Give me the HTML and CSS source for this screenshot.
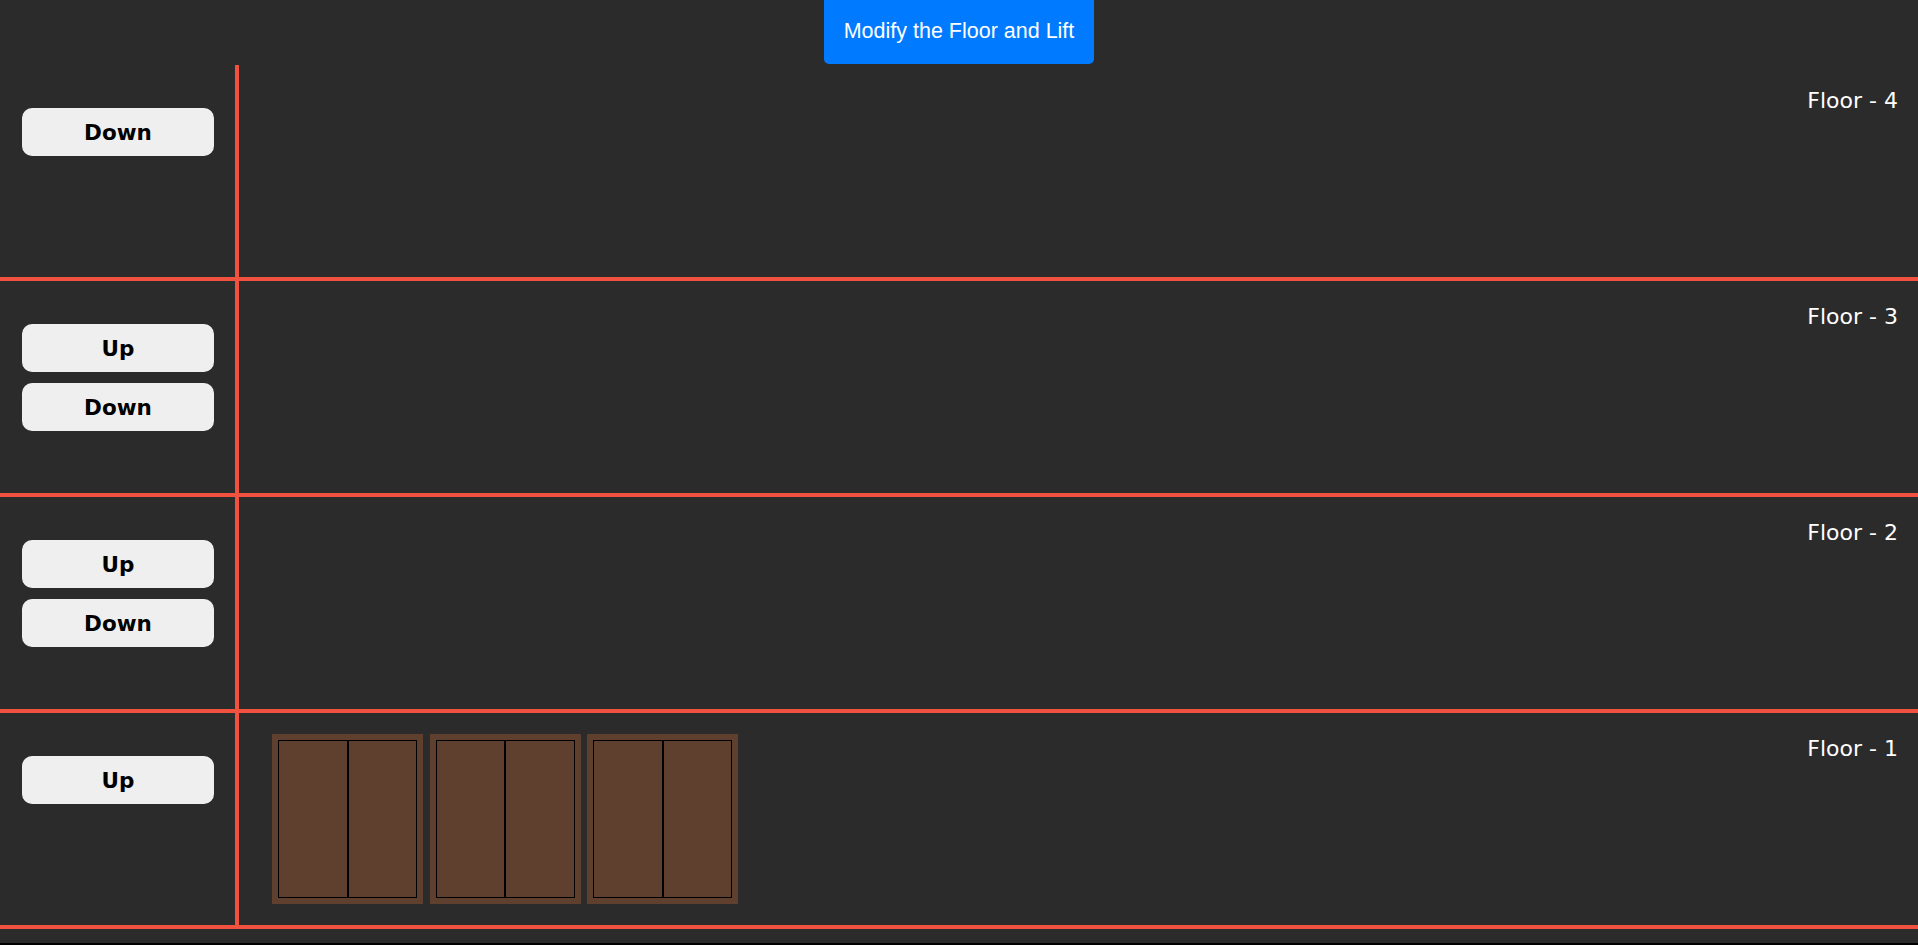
FILE: index.html
```html
<!DOCTYPE html>
<html lang="en">
<head>
<meta charset="utf-8">
<title>Lift Simulation</title>
<link rel="stylesheet" href="styles.css">
</head>
<body>
<div class="app">
  <header class="top">
    <button class="modify-btn">Modify the Floor and Lift</button>
  </header>
  <div class="building">
    <div class="floor">
      <div class="controls">
        <button class="call-btn">Down</button>
      </div>
      <div class="shaft">
        <div class="lifts"></div>
        <span class="floor-label">Floor - 4</span>
      </div>
    </div>
    <div class="floor">
      <div class="controls">
        <button class="call-btn">Up</button>
        <button class="call-btn">Down</button>
      </div>
      <div class="shaft">
        <div class="lifts"></div>
        <span class="floor-label">Floor - 3</span>
      </div>
    </div>
    <div class="floor">
      <div class="controls">
        <button class="call-btn">Up</button>
        <button class="call-btn">Down</button>
      </div>
      <div class="shaft">
        <div class="lifts"></div>
        <span class="floor-label">Floor - 2</span>
      </div>
    </div>
    <div class="floor">
      <div class="controls">
        <button class="call-btn">Up</button>
      </div>
      <div class="shaft">
        <div class="lifts">
          <div class="lift"><div class="door"></div><div class="door"></div></div>
          <div class="lift"><div class="door"></div><div class="door"></div></div>
          <div class="lift"><div class="door"></div><div class="door"></div></div>
        </div>
        <span class="floor-label">Floor - 1</span>
      </div>
    </div>
  </div>
</div>
</body>
</html>
```
FILE: styles.css
```css
* {
  box-sizing: border-box;
}

html, body {
  margin: 0;
  padding: 0;
  background: #2b2b2b;
}

.app {
  background: #2b2b2b;
  padding-bottom: 14px;
  border-bottom: 2px solid #000;
}

.top {
  height: 65px;
  display: flex;
  justify-content: center;
  align-items: flex-start;
}

.modify-btn {
  font-family: "Liberation Sans", Arial, sans-serif;
  font-size: 21.5px;
  color: #fff;
  background: #007bff;
  border: none;
  border-radius: 0 0 5px 5px;
  padding: 19px 20px 21px;
  line-height: 24px;
  cursor: pointer;
}

.floor {
  display: flex;
  height: 216px;
  border-bottom: 4px solid #f0523f;
}

.controls {
  width: 239px;
  flex: none;
  border-right: 4px solid #f0523f;
  padding: 43px 0 0 22px;
  display: flex;
  flex-direction: column;
  gap: 11px;
}

.call-btn {
  width: 192px;
  height: 48px;
  border: none;
  border-radius: 10px;
  background: #efefef;
  color: #000;
  font-family: "DejaVu Sans", Verdana, sans-serif;
  font-weight: bold;
  font-size: 21.5px;
  padding: 0;
  cursor: pointer;
}

.shaft {
  flex: 1;
  display: flex;
  padding: 21px 20px 0 33px;
}

.lifts {
  display: flex;
  gap: 6.5px;
  align-items: flex-start;
}

.lift {
  width: 151px;
  height: 170px;
  background: #5f3f2d;
  padding: 6px;
  display: flex;
}

.door {
  flex: 1;
  border: 1px solid #000;
}

.floor-label {
  margin-left: auto;
  margin-top: 2px;
  font-family: "DejaVu Sans", Verdana, sans-serif;
  font-size: 22px;
  color: #fff;
  line-height: 26px;
}
```
